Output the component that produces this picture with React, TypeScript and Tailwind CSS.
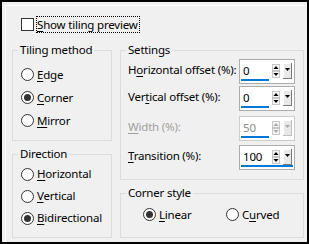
import type { ReactNode } from "react";

// access-key label: underline one letter
function Key({ text, at }: { text: string; at: number }) {
  return (
    <>
      {text.slice(0, at)}
      <span className="underline decoration-1 underline-offset-[2px]">{text[at]}</span>
      {text.slice(at + 1)}
    </>
  );
}

function Radio({ label, at, checked }: { label: string; at: number; checked?: boolean }) {
  return (
    <div className="flex items-center gap-[3px]">
      <span className="w-[13px] h-[13px] rounded-full border border-[#333333] bg-white flex items-center justify-center shrink-0">
        {checked && <span className="w-[7px] h-[7px] rounded-full bg-[#333333]" />}
      </span>
      <span className="leading-none whitespace-nowrap">
        <Key text={label} at={at} />
      </span>
    </div>
  );
}

function Group({ title, className, children }: { title: string; className: string; children: ReactNode }) {
  return (
    <div className={"relative border border-[#dcdcdc] " + className}>
      <span className="absolute left-[5px] -top-[8px] bg-[#f0f0f0] px-[2px] leading-[14px] whitespace-nowrap">{title}</span>
      {children}
    </div>
  );
}

function SpinButtons({ disabled }: { disabled?: boolean }) {
  const ink = disabled ? "#a8a8a8" : "#000000";
  return (
    <div className="flex items-center gap-[3px]">
      <svg width="8" height="14" viewBox="0 0 8 14">
        <rect x="0.5" y="0.5" width="7" height="13" fill="#f4f4f4" stroke="#c8c8c8" />
        <line x1="0.5" y1="7" x2="7.5" y2="7" stroke="#9a9a9a" />
        <path d="M4 2 L6.5 5 L1.5 5 Z" fill={ink} />
        <path d="M1.5 9 L6.5 9 L4 12 Z" fill={ink} />
      </svg>
      <svg width="9" height="16" viewBox="0 0 9 16">
        <rect x="0" y="0" width="9" height="16" fill="#e9e9e9" />
        <line x1="0" y1="0.5" x2="9" y2="0.5" stroke="#ffffff" />
        <line x1="0.5" y1="0" x2="0.5" y2="16" stroke="#ffffff" />
        <line x1="8.5" y1="0" x2="8.5" y2="16" stroke={disabled ? "#c0c0c0" : "#7a7a7a"} />
        <line x1="0" y1="15.5" x2="9" y2="15.5" stroke={disabled ? "#c0c0c0" : "#7a7a7a"} />
        <path d="M2 5 L7 5 L4.5 8 Z" fill={ink} />
      </svg>
    </div>
  );
}

function Spin({ value, disabled, focused }: { value: string; disabled?: boolean; focused?: boolean }) {
  return (
    <div
      className={
        "w-[56px] h-[25px] shrink-0 bg-white border flex flex-col pl-[1px] pt-[3px] " +
        (disabled ? "border-[#cccccc]" : "border-[#adadad]")
      }
    >
      <div className="h-[16px] flex items-center">
        <span className={"w-[28px] pl-[2px] leading-none " + (disabled ? "text-[#8d8d8d]" : "text-black")}>{value}</span>
        <div className="ml-[3px]">
          <SpinButtons disabled={disabled} />
        </div>
      </div>
      <div className={"h-[2px] bg-[#0078d7] " + (focused ? "w-[52px]" : "w-[28px]")} />
    </div>
  );
}

function SettingRow({ label, at, value, disabled, focused, className }: {
  label: string; at: number; value: string; disabled?: boolean; focused?: boolean; className?: string;
}) {
  return (
    <div className={"flex items-center justify-between h-[25px] " + (className ?? "")}>
      <span className={"leading-none pb-[4px] whitespace-nowrap " + (disabled ? "text-[#a0a0a0]" : "text-black")}>
        <Key text={label} at={at} />
      </span>
      <Spin value={value} disabled={disabled} focused={focused} />
    </div>
  );
}

export default function App() {
  return (
    <div className="w-[309px] h-[244px] border-2 border-black bg-[#f0f0f0] pt-[3px] pl-[3px] text-[11.5px] tracking-[-0.2px] text-black font-['Noto_Sans',sans-serif]">
      <div className="h-full border-t border-l border-white">
        {/* preview checkbox */}
        <div className="mt-[10px] ml-[15px] h-[17px] flex items-center gap-[2px]">
          <span className="w-[13px] h-[13px] border border-[#333333] bg-white" />
          <span className="h-[17px] border border-dotted border-black flex items-center pr-[1px] leading-none whitespace-nowrap">
            <Key text="Show tiling preview" at={0} />
          </span>
        </div>

        <div className="mt-[17px] ml-[6px] flex gap-[8px]">
          <div className="w-[100px] flex flex-col gap-[13px]">
            <Group title="Tiling method" className="h-[91px] pt-[12px] pl-[8px]">
              <div className="flex flex-col">
                <div className="h-[23px] flex items-center"><Radio label="Edge" at={0} /></div>
                <div className="h-[23px] flex items-center"><Radio label="Corner" at={0} checked /></div>
                <div className="h-[23px] flex items-center"><Radio label="Mirror" at={0} /></div>
              </div>
            </Group>
            <Group title="Direction" className="h-[84px] pt-[8px] pl-[8px]">
              <div className="flex flex-col">
                <div className="h-[22px] flex items-center"><Radio label="Horizontal" at={0} /></div>
                <div className="h-[22px] flex items-center"><Radio label="Vertical" at={0} /></div>
                <div className="h-[22px] flex items-center"><Radio label="Bidirectional" at={0} checked /></div>
              </div>
            </Group>
          </div>

          <div className="w-[184px] flex flex-col gap-[13px]">
            <Group title="Settings" className="h-[130px] pt-[8px] pl-[7px] pr-[8px]">
              <SettingRow label="Horizontal offset (%):" at={1} value="0" />
              <SettingRow label="Vertical offset (%):" at={3} value="0" className="mt-[2px]" />
              <SettingRow label="Width (%):" at={0} value="50" disabled className="mt-[5px]" />
              <SettingRow label="Transition (%):" at={0} value="100" focused className="mt-[4px]" />
            </Group>
            <Group title="Corner style" className="h-[45px] pt-[14px] pl-[22px]">
              <div className="flex">
                <div className="w-[83px]"><Radio label="Linear" at={0} checked /></div>
                <Radio label="Curved" at={1} />
              </div>
            </Group>
          </div>
        </div>
      </div>
    </div>
  );
}
